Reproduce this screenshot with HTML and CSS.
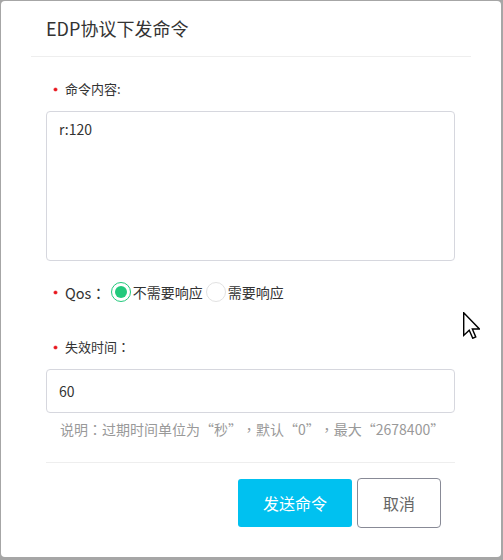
FILE: index.html
```html
<!DOCTYPE html>
<html lang="zh">
<head>
<meta charset="utf-8">
<title>EDP协议下发命令</title>
<link rel="stylesheet" href="styles.css">
</head>
<body>
<div class="dialog">
  <div class="header"><h1 class="title">EDP协议下发命令</h1></div>
  <div class="body">
    <div class="label label-first"><span class="req"></span>命令内容:</div>
    <div class="textarea">r:120</div>
    <div class="qos">
      <span class="req"></span><span class="qos-label">Qos<span class="fw">：</span></span>
      <span class="radio checked"><span class="dot"></span></span><span class="radio-text">不需要响应</span>
      <span class="radio"></span><span class="radio-text">需要响应</span>
    </div>
    <div class="label label-time"><span class="req"></span>失效时间<span class="fw">：</span></div>
    <div class="input">60</div>
    <div class="help">说明<span class="fw">：</span>过期时间单位为<span class="fw">“</span>秒<span class="fw">”</span><span class="fw">，</span>默认<span class="fw">“</span>0<span class="fw">”</span><span class="fw">，</span>最大<span class="fw">“</span>2678400<span class="fw">”</span></div>
  </div>
  <div class="footer">
    <button class="btn btn-primary">发送命令</button>
    <button class="btn btn-cancel">取消</button>
  </div>
</div>
<svg class="cursor" width="17" height="27" viewBox="0 0 12 19"><path d="M0.5 0.5 L0.5 16.5 L4.4 12.8 L6.9 18.5 L9 17.6 L6.6 12 L11.6 12 Z" fill="#fff" stroke="#000" stroke-width="1" stroke-linejoin="miter"/></svg>
</body>
</html>
```
FILE: styles.css
```css
html, body {
  margin: 0;
  padding: 0;
  background: #a6a6a6;
  width: 503px;
  height: 560px;
  overflow: hidden;
  font-family: "Noto Sans CJK SC", "Noto Sans", sans-serif;
  color: #333;
}
body {
  padding: 1px 0 0 1px;
  box-sizing: border-box;
  position: relative;
}
.dialog {
  width: 500px;
  height: 556px;
  background: #fff;
  border-radius: 4px;
  display: flex;
  flex-direction: column;
}
.header {
  margin: 0 30px;
  height: 55px;
  border-bottom: 1px solid #eeeeee;
  display: flex;
  align-items: center;
  padding-left: 15px;
}
.title {
  margin: 0;
  font-size: 18px;
  font-weight: normal;
  color: #333;
  line-height: 24px;
  position: relative;
  top: -1px;
}
.body {
  padding: 0 46px 0 45px;
  display: flex;
  flex-direction: column;
}
.fw {
  display: inline-block;
  width: 1em;
  text-align: center;
  font-family: "Noto Sans CJK TC", sans-serif;
}
.label {
  display: flex;
  align-items: center;
  font-size: 13px;
  line-height: 18px;
  height: 18px;
  padding-left: 8px;
  color: #333;
}
.label-first { margin-top: 23px; }
.label-time { margin-top: 35px; }
.req {
  display: inline-block;
  width: 3px;
  height: 3px;
  border-radius: 50%;
  background: #e8141b;
  margin-right: 8px;
  box-shadow: 0 0 0 0.6px #f06a6e;
  flex: none;
}
.textarea {
  margin-top: 13px;
  border: 1px solid #d6d7de;
  border-radius: 4px;
  padding: 7px 12px;
  box-sizing: border-box;
  height: 150px;
  font-size: 14px;
  line-height: 20px;
  color: #333;
}
.qos {
  margin-top: 20px;
  height: 22px;
  display: flex;
  align-items: center;
  padding-left: 8px;
  font-size: 14px;
}
.qos-label { margin-right: 5px; font-size: 14.5px; }
.radio {
  width: 20px;
  height: 20px;
  border: 1px solid #e2e2e2;
  border-radius: 50%;
  box-sizing: border-box;
  display: flex;
  align-items: center;
  justify-content: center;
  flex: none;
}
.radio.checked { border-color: #22c97c; }
.dot {
  width: 12px;
  height: 12px;
  border-radius: 50%;
  background: #22c97c;
}
.radio-text { margin: 0 3px 0 2px; color: #333; }
.input {
  margin-top: 13px;
  height: 44px;
  border: 1px solid #d6d7de;
  border-radius: 4px;
  box-sizing: border-box;
  padding: 0 12px;
  display: flex;
  align-items: center;
  font-size: 14px;
}
.help {
  margin-top: 7px;
  padding-left: 14px;
  font-size: 14px;
  line-height: 18px;
  color: #999;
  white-space: nowrap;
}
.footer {
  margin: 24px 46px 0 45px;
  border-top: 1px solid #eeeeee;
  padding-top: 15px;
  display: flex;
  justify-content: flex-end;
  align-items: center;
  padding-right: 14px;
  gap: 5px;
}
.btn {
  font-family: "Noto Sans CJK SC", sans-serif;
  font-size: 16px;
  border-radius: 3px;
  cursor: pointer;
  box-sizing: border-box;
}
.btn-primary {
  width: 114px;
  height: 48px;
  background: #00c1f0;
  color: #fff;
  border: none;
}
.btn-cancel {
  width: 84px;
  height: 50px;
  background: #fff;
  color: #666;
  border: 1px solid #888a96;
  border-radius: 4px;
}
.cursor {
  position: absolute;
  left: 463px;
  top: 312px;
}
```
